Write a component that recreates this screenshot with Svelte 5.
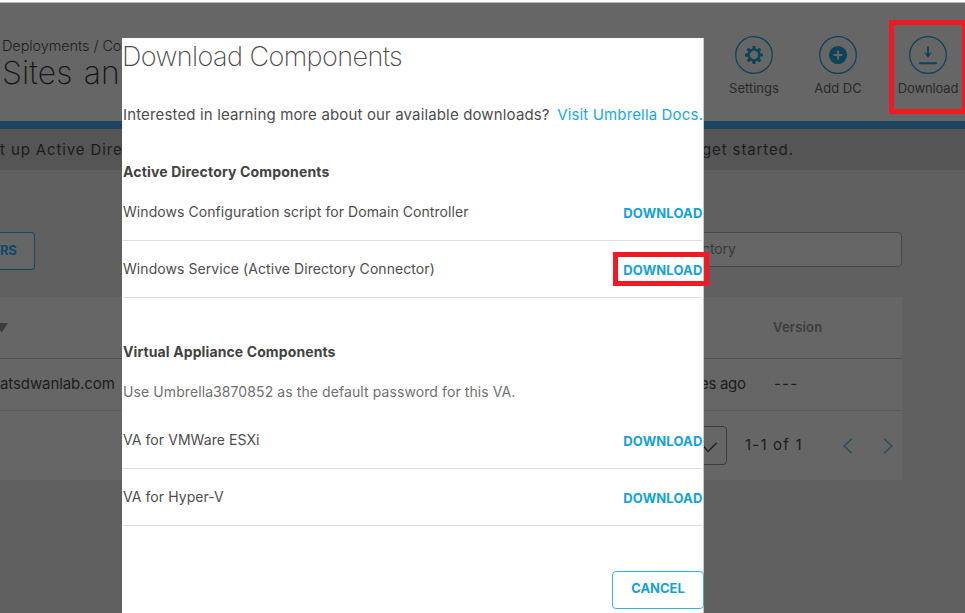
<script>
  const groups = [
    {
      title: 'Active Directory Components',
      cls: 'directory',
      note: '',
      items: ['Windows Configuration script for Domain Controller', 'Windows Service (Active Directory Connector)']
    },
    {
      title: 'Virtual Appliance Components',
      cls: 'appliance',
      note: 'Use Umbrella3870852 as the default password for this VA.',
      items: ['VA for VMWare ESXi', 'VA for Hyper-V']
    }
  ];
  // eight gear teeth, placed every 45 degrees
  const teeth = [0, 45, 90, 135, 180, 225, 270, 315];
</script>

<div class="page">
  <header>
    <div class="heading">
      <div class="crumbs">Deployments / Co</div>
      <h1>Sites an</h1>
    </div>
    <nav>
      <div class="action settings">
        <svg width="38" height="38" viewBox="0 0 38 38" fill="none" stroke="#0b4459">
          <circle cx="19" cy="19" r="18.3" stroke-width="1.3" />
          <circle cx="19" cy="19" r="5.3" stroke-width="2.2" />
          {#each teeth as angle}
            <path d="M17 13.4 L17.7 10 H20.3 L21 13.4 Z" fill="#0b4459" stroke="none" transform="rotate({angle} 19 19)" />
          {/each}
        </svg>
        <span>Settings</span>
      </div>
      <div class="action add">
        <svg width="38" height="38" viewBox="0 0 38 38" fill="none">
          <circle cx="19" cy="19" r="18.3" stroke="#0b4459" stroke-width="1.3" />
          <circle cx="19" cy="19" r="9.1" fill="#0b4459" />
          <path d="M14.5 19 H23.5 M19 14.5 V23.5" stroke="#666" stroke-width="2" />
        </svg>
        <span>Add DC</span>
      </div>
      <div class="action get">
        <svg width="38" height="38" viewBox="0 0 38 38" fill="none">
          <circle cx="19" cy="19" r="18.3" stroke="#0b4459" stroke-width="1.3" />
          <path d="M19 10.5 V18" stroke="#0b4459" stroke-width="1.9" />
          <path d="M15 16 L19 18 L23 16 L19 22 Z" fill="#0b4459" />
          <path d="M11 27.2 H27" stroke="#0b4459" stroke-width="2" stroke-linecap="round" />
        </svg>
        <span>Download</span>
      </div>
    </nav>
  </header>
  <div class="banner">
    <span>t up Active Dire</span>
    <span>get started.</span>
  </div>
  <main>
    <div class="tools">
      <div class="filters">RS</div>
      <div class="search"><span>ctory</span></div>
    </div>
    <div class="table">
      <div class="tr head">
        <svg width="8" height="10" viewBox="0 0 8 10"><path d="M-4.5 0 H8 L1.7 9.5 Z" fill="#3c3c3c" /></svg>
        <b>Version</b>
      </div>
      <div class="tr row">
        <span class="domain">atsdwanlab.com</span>
        <span class="ago">es ago</span>
        <span class="dash">---</span>
      </div>
      <div class="pager">
        <div class="select">
          <svg width="22" height="14" viewBox="0 0 22 14" fill="none" stroke="#222" stroke-width="1.5"><path d="M3 3.5 L9 10.5 L17.5 2" /></svg>
        </div>
        <span>1-1 of 1</span>
        <svg class="prev" width="10" height="16" viewBox="0 0 10 16" fill="none" stroke="#234c5f" stroke-width="1.4"><path d="M8.8 .8 L1 8 L8.8 15.2" /></svg>
        <svg class="next" width="10" height="16" viewBox="0 0 10 16" fill="none" stroke="#234c5f" stroke-width="1.4"><path d="M1 .8 L9 8 L1 15.2" /></svg>
      </div>
    </div>
  </main>

  <section class="modal">
    <h2>Download Components</h2>
    <p class="intro"><span>Interested in learning more about our available downloads?</span><a href="#docs">Visit Umbrella Docs.</a></p>
    {#each groups as group}
      <div class={group.cls}>
        <h3>{group.title}</h3>
        {#if group.note}<p class="note">{group.note}</p>{/if}
        {#each group.items as item}
          <div class="item"><span>{item}</span><b>DOWNLOAD</b></div>
        {/each}
      </div>
    {/each}
    <button>CANCEL</button>
  </section>

  <div class="mark mark-nav"></div>
  <div class="mark mark-item"></div>
</div>

<style>
  .page {
    position: relative;
    box-sizing: border-box;
    width: 965px;
    height: 613px;
    overflow: hidden;
    background: #606060;
    border-top: 2px solid #fdfdfd;
    font-family: Inter, "Liberation Sans", sans-serif;
    white-space: nowrap;
    color: #1c1c1e;
  }
  header {
    box-sizing: border-box;
    height: 127px;
    display: flex;
    justify-content: space-between;
    background: #666;
    border-top: 1px solid #b4b6b9;
    border-bottom: 8px solid #1e4663;
  }
  .heading { width: 260px; padding: 34px 0 0 2px; }
  .crumbs { font-size: 14.5px; line-height: 18px; font-weight: 300; letter-spacing: -0.1px; color: #202020; }
  h1 { margin: 0; font-size: 32px; line-height: 36px; font-weight: 200; letter-spacing: 0.1px; word-spacing: 2px; color: #161616; }
  nav { display: flex; padding-top: 33px; }
  .action { display: flex; flex-direction: column; align-items: center; font-size: 13px; line-height: 16px; color: #2a2a2a; }
  .action span { margin-top: 6px; }
  .settings { width: 84px; }
  .add { width: 84px; }
  .get { width: 74px; margin-left: 11px; letter-spacing: -0.15px; }
  .banner {
    box-sizing: border-box;
    height: 41px;
    display: flex;
    background: #555;
    font-size: 15px;
    line-height: 41px;
    letter-spacing: 0.88px;
  }
  .banner span:first-child { width: 702px; }
  main { padding-right: 63px; }
  .tools { display: flex; justify-content: space-between; padding-top: 62px; height: 65px; }
  .filters {
    box-sizing: border-box;
    width: 35px;
    height: 38px;
    border: 1.5px solid #0e4a60;
    border-left: 0;
    border-radius: 0 4px 4px 0;
    background: #666;
    color: #0d4a64;
    font-size: 13px;
    font-weight: 700;
    line-height: 35px;
    letter-spacing: -0.4px;
  }
  .search {
    box-sizing: border-box;
    width: 240px;
    height: 35px;
    border: 1.5px solid #494949;
    border-radius: 4px;
    background: #666;
    padding-left: 39px;
    font-size: 14px;
    line-height: 31px;
    letter-spacing: -0.1px;
    color: #383838;
  }
  .table { height: 183px; background: #666; }
  .tr { box-sizing: border-box; display: flex; align-items: center; }
  .head { height: 62px; border-bottom: 1px solid #515151; }
  .head b { margin: 0 0 2px 765px; font-size: 13px; font-weight: 600; letter-spacing: 0.2px; color: #3b3b3b; }
  .row { height: 52px; padding-bottom: 2px; border-bottom: 1px solid #595959; font-size: 15px; }
  .domain { width: 700px; letter-spacing: -0.1px; }
  .ago { width: 74px; letter-spacing: -0.3px; }
  .dash { letter-spacing: 1.2px; }
  .pager { display: flex; align-items: center; height: 69px; padding-left: 640px; font-size: 15px; letter-spacing: 1.2px; }
  .pager span { width: 98px; margin: 0 0 2px 18px; }
  .select {
    box-sizing: border-box;
    width: 87px;
    height: 39px;
    border: 1.5px solid #3c3c3c;
    border-radius: 4px;
    display: flex;
    align-items: center;
    justify-content: flex-end;
    padding: 5px 5px 0 0;
  }
  .next { margin-left: 30px; }

  .modal {
    box-sizing: border-box;
    position: absolute;
    left: 122px;
    top: 36px;
    width: 582px;
    height: 575px;
    padding: 0 1px;
    display: flex;
    flex-direction: column;
    background: #fff;
    color: #4d4d4d;
    border-right: 1px solid #c8c8c8;
  }
  h2 { margin: 2px 0 0 -1px; font-size: 27px; line-height: 34px; font-weight: 200; letter-spacing: -0.58px; color: #4a4a4a; }
  .intro { display: flex; justify-content: space-between; margin: 32px -1px 0 0; font-size: 15px; line-height: 18px; letter-spacing: 0.15px; }
  a { color: #14abe0; text-decoration: none; }
  h3 { margin: 0; font-size: 14px; line-height: 18px; font-weight: 700; letter-spacing: 0.17px; color: #424242; }
  .directory { padding-top: 39px; }
  .directory h3 { margin-bottom: 3px; }
  .appliance { padding-top: 45px; }
  .appliance h3 { letter-spacing: 0.11px; }
  .note { margin: 22px 0 11px; font-size: 14px; line-height: 18px; letter-spacing: 0.09px; color: #707070; }
  .item {
    box-sizing: border-box;
    height: 57px;
    display: flex;
    justify-content: space-between;
    align-items: center;
    border-bottom: 1px solid #dedede;
    font-size: 14px;
    letter-spacing: 0.07px;
  }
  .item span { padding-bottom: 2px; }
  .item b { padding-top: 1px; margin-right: -0.5px; font-size: 13px; font-weight: 700; letter-spacing: 0.15px; color: #12a2da; }
  button {
    box-sizing: border-box;
    align-self: flex-end;
    width: 92px;
    height: 38px;
    margin: 45px -2px 0 0;
    padding: 0 0 3px;
    flex: none;
    border: 1.5px solid #35b3e2;
    border-radius: 4px;
    background: #fff;
    color: #12a2da;
    font: 700 13px/1 Inter, "Liberation Sans", sans-serif;
  }
  .mark { box-sizing: border-box; position: absolute; border: 5px solid #f01a22; }
  .mark-nav { left: 889px; top: 18px; width: 78px; height: 94px; }
  .mark-item { left: 613px; top: 250px; width: 96px; height: 34px; }
</style>
